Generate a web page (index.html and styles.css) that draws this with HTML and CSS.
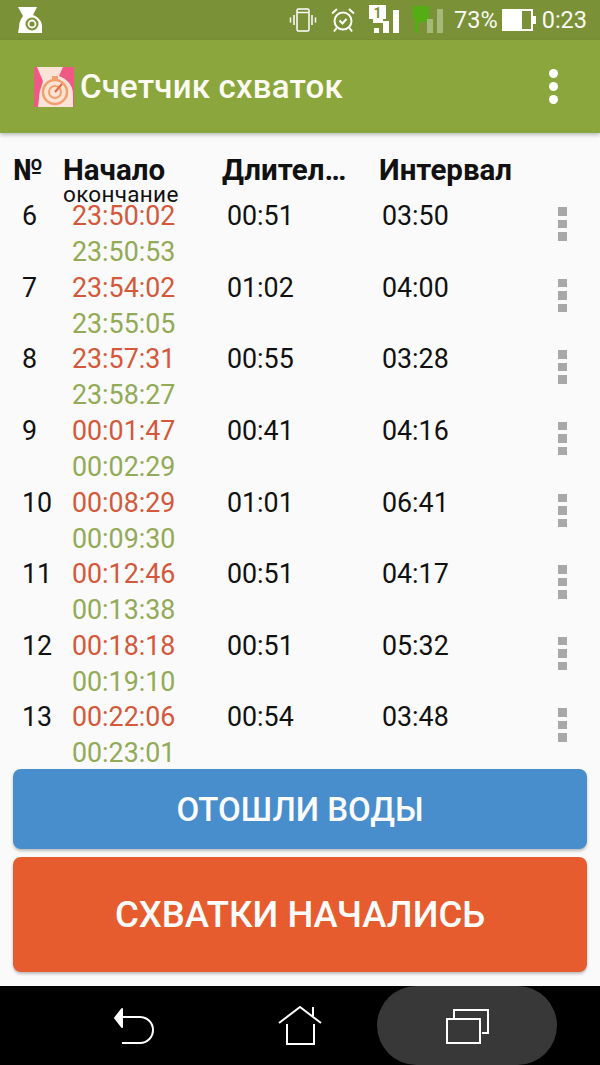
FILE: index.html
```html
<!DOCTYPE html>
<html>
<head>
  <title>Счетчик схваток</title>
  <link rel="stylesheet" href="styles.css">
</head>
<body>
  <div class="status-bar">
    <svg class="status-app" width="26" height="28" viewBox="0 0 26 28">
      <path d="M1 1h19l-4 8c5 2 9 6 9 11v7H1l1-6c0-5 2-8 4-11z" fill="#fff"/>
      <circle cx="15" cy="18" r="6.500" fill="#7a9137"/>
      <circle cx="15" cy="18" r="3.500" fill="none" stroke="#fff" stroke-width="1.800"/>
    </svg>
    <div class="status-right">
      <svg width="28" height="24" viewBox="0 0 28 24" fill="none" stroke="#fff" stroke-width="1.500">
        <rect x="8" y="1" width="12" height="22" rx="1.500"/>
        <path d="M8 4.500h12"/>
        <path d="M5 7v10M1.500 9.500v5M23 7v10M26.500 9.500v5"/>
      </svg>
      <svg class="status-alarm" width="26" height="26" viewBox="0 0 26 26" fill="none" stroke="#fff" stroke-width="2">
        <circle cx="13" cy="14" r="8.500"/>
        <path d="M2 6.500 7 2M24 6.500 19 2M6.500 21l-2.500 3.500M19.500 21l2.500 3.500"/>
        <path d="M9.500 13.500l3 3 4-4.500"/>
      </svg>
      <svg class="status-sim" width="32" height="29" viewBox="0 0 32 29" fill="#fff">
        <path d="M0 1h17v14h-3v4H4v-4H0z"/>
        <text x="8.500" y="14" class="sim-digit">1</text>
        <rect x="5" y="24" width="5" height="5"/>
        <rect x="14" y="17" width="6" height="12"/>
        <rect x="24" y="6" width="6" height="23"/>
      </svg>
      <svg class="status-sim" width="32" height="29" viewBox="0 0 32 29">
        <path d="M0 2h16v13h-2v3H5v11H2V15H0z" fill="#54ad12"/>
        <rect x="14" y="15" width="6" height="14" fill="#a5b97a"/>
        <rect x="24" y="5" width="6" height="24" fill="#a5b97a"/>
      </svg>
      <span class="status-text percent">73%</span>
      <svg class="status-battery" width="34" height="24" viewBox="0 0 34 24">
        <path d="M1 2h29v20H1z" fill="none" stroke="#fff" stroke-width="2"/>
        <rect x="1" y="2" width="19" height="20" fill="#fff"/>
        <rect x="30" y="8" width="4" height="8" fill="#fff"/>
      </svg>
      <span class="status-text">0:23</span>
    </div>
  </div>

  <div class="toolbar">
    <svg class="app-icon" width="40" height="40" viewBox="0 0 40 40">
      <rect width="40" height="40" fill="#ef5a85"/>
      <path d="M3 0h26l-4 9c8 3 14 9 14 18v13H4l1-8c0-8 3-13 4-18z" fill="#fbe3d5"/>
      <circle cx="21" cy="25" r="12" fill="#fbe3d5" stroke="#f2a070" stroke-width="2.500"/>
      <circle cx="21" cy="25" r="6" fill="none" stroke="#f2a070" stroke-width="2"/>
      <path d="M21 25l7-8" stroke="#e8683f" stroke-width="2"/>
      <rect x="18" y="9" width="6" height="4" fill="#f2a070"/>
    </svg>
    <div class="toolbar-title">Счетчик схваток</div>
    <div class="toolbar-menu"><i></i><i></i><i></i></div>
  </div>

  <div class="content">
    <div class="table-head">
      <div>№</div>
      <div>Начало<small>окончание</small></div>
      <div>Длител…</div>
      <div>Интервал</div>
    </div>

    <div class="rows">
      <div class="row">
        <div>6</div>
        <div><span class="start">23:50:02</span><span class="end">23:50:53</span></div>
        <div>00:51</div>
        <div>03:50</div>
        <div class="more"><i></i><i></i><i></i></div>
      </div>
      <div class="row">
        <div>7</div>
        <div><span class="start">23:54:02</span><span class="end">23:55:05</span></div>
        <div>01:02</div>
        <div>04:00</div>
        <div class="more"><i></i><i></i><i></i></div>
      </div>
      <div class="row">
        <div>8</div>
        <div><span class="start">23:57:31</span><span class="end">23:58:27</span></div>
        <div>00:55</div>
        <div>03:28</div>
        <div class="more"><i></i><i></i><i></i></div>
      </div>
      <div class="row">
        <div>9</div>
        <div><span class="start">00:01:47</span><span class="end">00:02:29</span></div>
        <div>00:41</div>
        <div>04:16</div>
        <div class="more"><i></i><i></i><i></i></div>
      </div>
      <div class="row">
        <div>10</div>
        <div><span class="start">00:08:29</span><span class="end">00:09:30</span></div>
        <div>01:01</div>
        <div>06:41</div>
        <div class="more"><i></i><i></i><i></i></div>
      </div>
      <div class="row">
        <div>11</div>
        <div><span class="start">00:12:46</span><span class="end">00:13:38</span></div>
        <div>00:51</div>
        <div>04:17</div>
        <div class="more"><i></i><i></i><i></i></div>
      </div>
      <div class="row">
        <div>12</div>
        <div><span class="start">00:18:18</span><span class="end">00:19:10</span></div>
        <div>00:51</div>
        <div>05:32</div>
        <div class="more"><i></i><i></i><i></i></div>
      </div>
      <div class="row">
        <div>13</div>
        <div><span class="start">00:22:06</span><span class="end">00:23:01</span></div>
        <div>00:54</div>
        <div>03:48</div>
        <div class="more"><i></i><i></i><i></i></div>
      </div>
    </div>

    <div class="actions">
      <button class="btn-water">ОТОШЛИ ВОДЫ</button>
      <button class="btn-start">СХВАТКИ НАЧАЛИСЬ</button>
    </div>
  </div>

  <div class="nav-bar">
    <svg class="nav-back" width="42" height="38" viewBox="0 0 42 38" fill="none" stroke="#fff" stroke-width="2">
      <path d="M9 10h18a13 13 0 0 1 0 26H9"/>
      <path d="M2 11l7-9v18z" fill="#fff" stroke="#fff" stroke-linejoin="round"/>
    </svg>
    <svg class="nav-home" width="44" height="40" viewBox="0 0 44 40" fill="none" stroke="#fff" stroke-width="2">
      <path d="M1 17 22 1l21 16"/>
      <path d="M35 10V1"/>
      <path d="M9 18v20h27V18"/>
    </svg>
    <div class="nav-recent">
      <svg width="44" height="38" viewBox="0 0 44 38" fill="none" stroke="#fff" stroke-width="2">
        <rect x="2" y="12" width="33" height="24"/>
        <path d="M9 11V3h34v23h-6"/>
      </svg>
    </div>
  </div>
</body>
</html>
```

FILE: styles.css
```css
:root {
  --status-color: #7a9137;
  --toolbar-color: #8ba63c;
  --bg-color: #fafafa;
  --red-color: #d4583a;
  --green-color: #93aa57;
}

* {
  box-sizing: border-box;
}

html, body {
  margin: 0;
  height: 100%;
}

body {
  width: 600px;
  height: 1065px;
  display: flex;
  flex-direction: column;
  overflow: hidden;
  font-family: Roboto, sans-serif;
  background-color: var(--bg-color);
  color: #111;
}

.status-bar {
  height: 40px;
  flex: none;
  display: flex;
  justify-content: space-between;
  align-items: center;
  padding: 0 13px 0 17px;
  background-color: var(--status-color);
  color: white;
}

.status-right {
  display: flex;
  align-items: center;
}

.status-right svg {
  display: block;
}

.status-alarm {
  margin-left: 13px;
}

.status-sim {
  margin-left: 13px;
  margin-top: -4px;
}

.status-sim + .status-sim {
  margin-left: 12px;
}

.sim-digit {
  font-family: Roboto, sans-serif;
  font-size: 14px;
  font-weight: 700;
  text-anchor: middle;
  fill: #7a9137;
}

.status-text {
  font-size: 23.500px;
  opacity: 0.95;
}

.percent {
  margin-left: 9px;
}

.status-battery {
  margin: 0 6px 0 4px;
}

.toolbar {
  height: 93px;
  flex: none;
  display: flex;
  align-items: center;
  padding-left: 34px;
  background-color: var(--toolbar-color);
  box-shadow: 0 2px 4px rgba(0,0,0,0.25);
  color: #fbfbf3;
}

.app-icon {
  flex: none;
}

.toolbar-title {
  margin-left: 6px;
  font-size: 33px;
  font-weight: 500;
  letter-spacing: 0.2px;
}

.toolbar-menu {
  margin-left: auto;
  margin-right: 42px;
  display: flex;
  flex-direction: column;
  gap: 4px;
}

.toolbar-menu i {
  width: 9px;
  height: 9px;
  border-radius: 50%;
  background-color: white;
}

.content {
  flex: 1;
  min-height: 0;
  display: flex;
  flex-direction: column;
  padding: 21px 13px 14px;
}

.table-head {
  height: 47px;
  flex: none;
  display: grid;
  grid-template-columns: 50px 159px 157px auto;
  padding-left: 0;
  font-size: 29.500px;
  font-weight: 700;
  line-height: 32px;
}

.table-head small {
  display: block;
  font-size: 22.500px;
  font-weight: 400;
  line-height: 16px;
  letter-spacing: 0.3px;
}

.rows {
  flex: 1;
  min-height: 0;
}

.row {
  height: 71.650px;
  display: grid;
  grid-template-columns: 50px 155px 155px 175.500px 11px;
  align-items: start;
  padding-left: 9px;
  font-size: 26.800px;
  line-height: 30px;
}

.row span {
  display: block;
}

.start {
  color: var(--red-color);
}

.end {
  margin-top: 6px;
  color: var(--green-color);
}

.more {
  display: flex;
  flex-direction: column;
  gap: 4px;
  padding-top: 6px;
}

.more i {
  width: 9px;
  height: 8.500px;
  background-color: #a8a8a8;
}

.actions {
  flex: none;
  display: flex;
  flex-direction: column;
  gap: 8px;
}

button {
  display: block;
  width: 100%;
  border: none;
  border-radius: 8px;
  color: #fcfcfc;
  font-family: inherit;
  font-weight: 500;
  box-shadow: 0 2px 3px rgba(0,0,0,0.25);
}

.btn-water {
  height: 80px;
  background-color: #488dcc;
  font-size: 33px;
}

.btn-start {
  height: 115px;
  background-color: #e65c2e;
  font-size: 36.500px;
}

.nav-bar {
  height: 79px;
  flex: none;
  display: flex;
  align-items: center;
  background-color: black;
}

.nav-bar svg {
  flex: none;
}

.nav-back {
  margin-left: 113px;
}

.nav-home {
  margin-left: 123px;
}

.nav-recent {
  width: 180px;
  height: 79px;
  margin-left: 55px;
  display: flex;
  align-items: center;
  justify-content: center;
  border-radius: 40px;
  background-color: #383838;
}
```
